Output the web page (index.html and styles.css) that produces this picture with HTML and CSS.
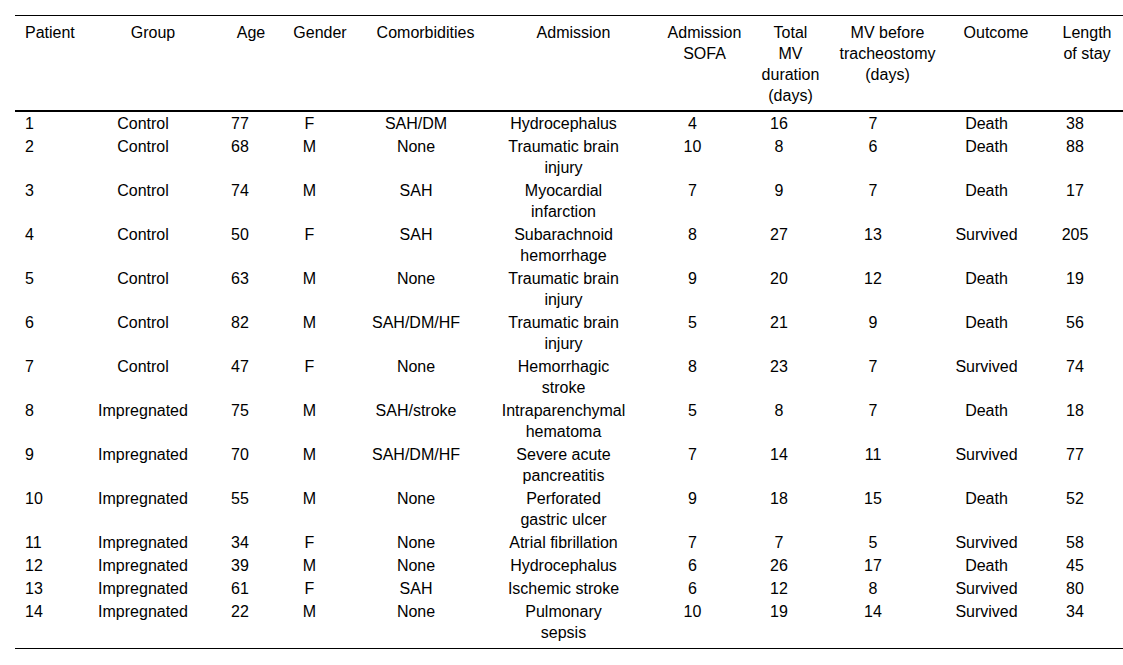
FILE: index.html
```html
<!DOCTYPE html>
<html lang="en">
<head>
<meta charset="utf-8">
<title>Patients</title>
<link rel="stylesheet" href="styles.css">
</head>
<body>
<table class="tbl">
  <colgroup>
    <col class="c1"><col class="c2"><col class="c3"><col class="c4"><col class="c5"><col class="c6"><col class="c7"><col class="c8"><col class="c9"><col class="c10"><col class="c11">
  </colgroup>
  <thead>
    <tr>
      <th>Patient</th>
      <th>Group</th>
      <th>Age</th>
      <th>Gender</th>
      <th>Comorbidities</th>
      <th>Admission</th>
      <th>Admission SOFA</th>
      <th>Total MV duration (days)</th>
      <th>MV before tracheostomy (days)</th>
      <th>Outcome</th>
      <th>Length of stay</th>
    </tr>
  </thead>
  <tbody>
    <tr><td>1</td><td>Control</td><td>77</td><td>F</td><td>SAH/DM</td><td>Hydrocephalus</td><td>4</td><td>16</td><td>7</td><td>Death</td><td>38</td></tr>
    <tr><td>2</td><td>Control</td><td>68</td><td>M</td><td>None</td><td>Traumatic brain injury</td><td>10</td><td>8</td><td>6</td><td>Death</td><td>88</td></tr>
    <tr><td>3</td><td>Control</td><td>74</td><td>M</td><td>SAH</td><td>Myocardial infarction</td><td>7</td><td>9</td><td>7</td><td>Death</td><td>17</td></tr>
    <tr><td>4</td><td>Control</td><td>50</td><td>F</td><td>SAH</td><td>Subarachnoid hemorrhage</td><td>8</td><td>27</td><td>13</td><td>Survived</td><td>205</td></tr>
    <tr><td>5</td><td>Control</td><td>63</td><td>M</td><td>None</td><td>Traumatic brain injury</td><td>9</td><td>20</td><td>12</td><td>Death</td><td>19</td></tr>
    <tr><td>6</td><td>Control</td><td>82</td><td>M</td><td>SAH/DM/HF</td><td>Traumatic brain injury</td><td>5</td><td>21</td><td>9</td><td>Death</td><td>56</td></tr>
    <tr><td>7</td><td>Control</td><td>47</td><td>F</td><td>None</td><td>Hemorrhagic stroke</td><td>8</td><td>23</td><td>7</td><td>Survived</td><td>74</td></tr>
    <tr><td>8</td><td>Impregnated</td><td>75</td><td>M</td><td>SAH/stroke</td><td>Intraparenchymal hematoma</td><td>5</td><td>8</td><td>7</td><td>Death</td><td>18</td></tr>
    <tr><td>9</td><td>Impregnated</td><td>70</td><td>M</td><td>SAH/DM/HF</td><td>Severe acute pancreatitis</td><td>7</td><td>14</td><td>11</td><td>Survived</td><td>77</td></tr>
    <tr><td>10</td><td>Impregnated</td><td>55</td><td>M</td><td>None</td><td>Perforated gastric ulcer</td><td>9</td><td>18</td><td>15</td><td>Death</td><td>52</td></tr>
    <tr><td>11</td><td>Impregnated</td><td>34</td><td>F</td><td>None</td><td>Atrial fibrillation</td><td>7</td><td>7</td><td>5</td><td>Survived</td><td>58</td></tr>
    <tr><td>12</td><td>Impregnated</td><td>39</td><td>M</td><td>None</td><td>Hydrocephalus</td><td>6</td><td>26</td><td>17</td><td>Death</td><td>45</td></tr>
    <tr><td>13</td><td>Impregnated</td><td>61</td><td>F</td><td>SAH</td><td>Ischemic stroke</td><td>6</td><td>12</td><td>8</td><td>Survived</td><td>80</td></tr>
    <tr class="last"><td>14</td><td>Impregnated</td><td>22</td><td>M</td><td>None</td><td>Pulmonary sepsis</td><td>10</td><td>19</td><td>14</td><td>Survived</td><td>34</td></tr>
  </tbody>
</table>
</body>
</html>
```

FILE: styles.css
```css
html, body {
  margin: 0;
  padding: 0;
  background: #ffffff;
}

body {
  font-family: "Liberation Sans", Arial, sans-serif;
  font-size: 16px;
  line-height: 21px;
  color: #000000;
}

.tbl {
  margin: 15px 0 0 15px;
  width: 1108px;
  table-layout: fixed;
  border-collapse: separate;
  border-spacing: 0;
}

.c1 { width: 73px; }
.c2 { width: 117px; }
.c3 { width: 80px; }
.c4 { width: 70px; }
.c5 { width: 140px; }
.c6 { width: 150px; }
.c7 { width: 100px; }
.c8 { width: 85px; }
.c9 { width: 110px; }
.c10 { width: 100px; }
.c11 { width: 83px; }

.tbl th {
  font-weight: normal;
  text-align: center;
  vertical-align: top;
  padding: 6px 0 4px 0;
  border-top: 1px solid #000000;
  border-bottom: 2px solid #000000;
}

.tbl td {
  text-align: center;
  vertical-align: top;
  padding: 1px 0;
}

.tbl .last td {
  padding-bottom: 5px;
  border-bottom: 1px solid #000000;
}

/* column 1: left aligned */
.tbl th:nth-child(1),
.tbl td:nth-child(1) { text-align: left; padding-left: 10px; }

/* header offsets */
.tbl th:nth-child(2) { padding-left: 13px; }
.tbl th:nth-child(3) { padding-left: 12px; }
.tbl th:nth-child(5) { padding-left: 1px; }
.tbl th:nth-child(6) { padding-left: 7px; }
.tbl th:nth-child(7) { padding-left: 19px; }
.tbl th:nth-child(8) { padding-left: 15px; padding-right: 9px; }
.tbl th:nth-child(9) { padding-left: 5px; }
.tbl th:nth-child(10) { padding-left: 12px; }
.tbl th:nth-child(11) { padding-left: 17px; padding-right: 6px; }

/* data offsets */
.tbl td:nth-child(2) { padding-right: 7px; }
.tbl td:nth-child(3) { padding-right: 10px; }
.tbl td:nth-child(4) { padding-right: 21px; }
.tbl td:nth-child(5) { padding-right: 18px; }
.tbl td:nth-child(6) { padding-left: 6px; padding-right: 19px; }
.tbl td:nth-child(7) { padding-right: 5px; }
.tbl td:nth-child(8) { padding-right: 17px; }
.tbl td:nth-child(9) { padding-right: 24px; }
.tbl td:nth-child(10) { padding-right: 7px; }
.tbl td:nth-child(11) { padding-right: 13px; }
```
